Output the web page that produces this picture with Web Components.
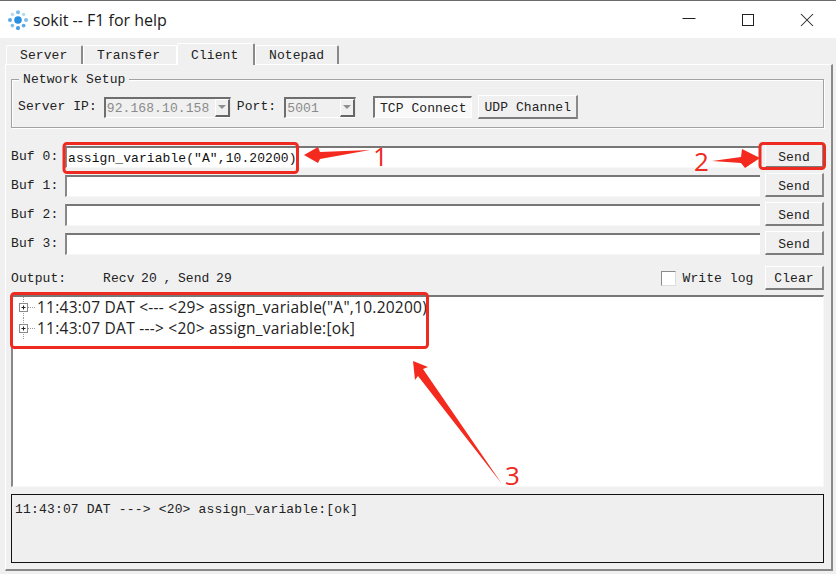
<!DOCTYPE html>
<html><head><meta charset="utf-8"><title>sokit</title>
<style>
html,body{margin:0;padding:0;background:#f5f5f5;overflow:hidden}
body{width:836px;height:574px;font:13px/16px "Liberation Mono",monospace;letter-spacing:.08px;color:#111}
</style></head><body>
<sokit-app>
  <title-bar slot="title">sokit -- F1 for help</title-bar>
  <tab-strip slot="tabs">
    <tab-item sep>Server</tab-item>
    <tab-item style="width:94px">Transfer</tab-item>
    <tab-item active sep style="width:78px">Client</tab-item>
    <tab-item sep style="width:84px">Notepad</tab-item>
  </tab-strip>
  <group-box label="Network Setup">
    <span>Server IP:</span>
    <combo-box style="width:127px;margin-left:7px">92.168.10.158</combo-box>
    <span style="margin-left:6px">Port:</span>
    <combo-box style="width:72px;margin-left:8px">5001</combo-box>
    <win-button pressed style="width:99px;height:22px;margin-left:17px">TCP Connect</win-button>
    <win-button style="width:100px;height:24px;margin-left:6px">UDP Channel</win-button>
  </group-box>
  <buf-row style="margin-top:16px" label="Buf 0:" value='assign_variable("A",10.20200)'></buf-row>
  <buf-row label="Buf 1:"></buf-row>
  <buf-row label="Buf 2:"></buf-row>
  <buf-row label="Buf 3:"></buf-row>
  <status-row recv="Recv 20 , Send 29"></status-row>
  <tree-view>
    <tree-row>11:43:07 DAT &lt;--- &lt;29&gt; assign_variable("A",10.20200)</tree-row>
    <tree-row>11:43:07 DAT ---&gt; &lt;20&gt; assign_variable:[ok]</tree-row>
  </tree-view>
  <log-box>11:43:07 DAT ---&gt; &lt;20&gt; assign_variable:[ok]</log-box>
  <red-markup slot="overlay"></red-markup>
</sokit-app>
<script>
function def(name, css, html, init){
  customElements.define(name, class extends HTMLElement{
    constructor(){super();const r=this.attachShadow({mode:'open'});
      r.innerHTML='<style>'+css+'</style>'+(typeof html==='function'?html(this):html);}
    connectedCallback(){ if(init) init(this); }
  });
}
const attr=(n,a)=>(n.getAttribute(a)||'');
def('sokit-app',
 `:host{display:flex;flex-direction:column;position:relative;width:836px;height:574px;box-sizing:border-box;border-top:1px solid #6b6b6b;background:#f5f5f5}
  .body{flex:none;background:#f0f0f0;height:536px;box-sizing:border-box;display:flex;flex-direction:column;padding:5px 0 3px}
  .pane{flex:1;margin:0 3px 0 5px;box-sizing:border-box;border-top:1px solid #fff;border-left:1px solid #fff;border-right:2px solid #888;border-bottom:2px solid #888;padding:14px 7px 6px 5px;display:flex;flex-direction:column;min-height:0}`,
 `<slot name="title"></slot><div class="body"><slot name="tabs"></slot><div class="pane"><slot></slot></div></div><slot name="overlay"></slot>`);
def('title-bar',
 `:host{display:flex;align-items:center;height:37px;background:#fff;font:16px/20px "Open Sans",sans-serif;letter-spacing:0;color:#1a1a1a;flex:none}
  .ico{margin:0 5px 0 8px;display:block;filter:blur(.35px)}
  .t{flex:1}
  .ctl{display:flex;width:176px;height:37px}
  .ctl div{flex:1;display:flex;align-items:center;justify-content:center}
  svg{display:block}`,
 `<svg class="ico" width="20" height="20" viewBox="0 0 20 20">
   <circle cx="10" cy="10" r="3.8" fill="#2b8fe0"/>
   <g fill="#7cbcea"><circle cx="10" cy="2.2" r="2"/><circle cx="15.6" cy="4.4" r="1.7" fill="#b4d9f2"/><circle cx="18" cy="10" r="2"/><circle cx="15.6" cy="15.6" r="1.9" fill="#5aa9e6"/><circle cx="10" cy="18" r="2.1" fill="#4aa0e4"/><circle cx="4.4" cy="15.6" r="1.8"/><circle cx="2" cy="10" r="2" fill="#5aa9e6"/><circle cx="4.4" cy="4.4" r="1.7" fill="#b4d9f2"/></g>
  </svg><span class="t"><slot></slot></span>
  <div class="ctl">
   <div><svg width="14" height="14" viewBox="0 0 14 14" style="margin-top:-2px"><path d="M0.5 6.5H13.5" stroke="#222" stroke-width="1"/></svg></div>
   <div><svg width="14" height="14" viewBox="0 0 14 14" style="margin-top:1px"><rect x="1.5" y="1.5" width="11" height="11" fill="none" stroke="#222" stroke-width="1"/></svg></div>
   <div><svg width="14" height="14" viewBox="0 0 14 14" style="margin-top:1px"><path d="M1 1L13 13M13 1L1 13" stroke="#222" stroke-width="1.05" fill="none"/></svg></div>
  </div>`);
def('tab-strip',`:host{display:flex;align-items:flex-end;height:21px;padding-left:6px;flex:none;position:relative}`,`<slot></slot>`);
def('tab-item',
 `:host{display:block;box-sizing:border-box;width:77px;height:19px;padding-left:13px;border-top:1px solid #fff;border-left:1px solid #fff;line-height:20px;color:#222;background:#f0f0f0;border-top-left-radius:2px;border-top-right-radius:2px;border-right:1px solid #fff}
  :host([sep]){border-right:2px solid #8a8a8a}
  :host([active]){height:22px;line-height:23px;margin-bottom:-1px;position:relative}`,
 `<slot></slot>`);
def('group-box',
 `:host{display:flex;align-items:center;box-sizing:border-box;height:49px;border:1px solid #a2a2a2;box-shadow:inset 1px 1px 0 #fff,1px 1px 0 #fff;padding:15px 0 8px 6px;position:relative;flex:none;color:#222}
  .lg{position:absolute;left:7px;top:-8px;padding:0 4px;background:#f0f0f0;line-height:16px}`,
 `<span class="lg"></span><slot></slot>`, n=>{n.shadowRoot.querySelector('.lg').textContent=attr(n,'label');});
def('combo-box',
 `:host{display:flex;box-sizing:border-box;height:21px;border-top:2px solid #6e6e6e;border-left:2px solid #6e6e6e;border-right:1px solid #e8e8e8;border-bottom:1px solid #fff;background:#f0f0f0;color:#8b8b8b;flex:none;overflow:hidden}
  .t{flex:1;padding-left:1px;line-height:19px;white-space:nowrap;overflow:hidden}
  .b{width:15px;flex:none;box-sizing:border-box;border-right:2px solid #666;border-bottom:2px solid #666;border-top:1px solid #fff;border-left:1px solid #fff;display:flex;align-items:center;justify-content:center;background:#f0f0f0}
  .b i{width:0;height:0;border-left:4px solid transparent;border-right:4px solid transparent;border-top:4px solid #8e8e8e}`,
 `<span class="t"><slot></slot></span><span class="b"><i></i></span>`);
def('win-button',
 `:host{display:flex;align-items:center;justify-content:center;box-sizing:border-box;flex:none;background:#f0f0f0;border-top:1px solid #fff;border-left:1px solid #fff;border-right:2px solid #8a8a8a;border-bottom:2px solid #7c7c7c;color:#222;white-space:nowrap;padding-top:3px}
  :host([pressed]){background:#f9f9f9;border-top:2px solid #777;border-left:2px solid #777;border-right:1px solid #fff;border-bottom:1px solid #fff}`,
 `<slot></slot>`);
def('buf-row',
 `:host{display:flex;align-items:flex-end;height:24px;margin-bottom:5px;flex:none;color:#222}
  .l{width:54px;line-height:26px;height:24px;align-self:flex-start}
  .f{width:695px;height:22px;box-sizing:border-box;background:#fff;border-top:2px solid #777;border-left:2px solid #888;border-bottom:1px solid #f7f7f7;color:#111;padding-left:1px;line-height:21px;white-space:nowrap;overflow:hidden}
  win-button{width:59px;height:24px;margin-left:5px;padding-top:5px}`,
 n=>`<span class="l">${attr(n,'label')}</span><span class="f"></span><win-button>Send</win-button>`,
 n=>{n.shadowRoot.querySelector('.f').textContent=attr(n,'value');});
def('status-row',
 `:host{display:flex;align-items:center;height:24px;margin-top:6px;margin-bottom:5px;flex:none;color:#222;line-height:18px}
  .o{width:92px;padding-top:2px}
  .r{flex:1;word-spacing:-1.3px;padding-top:2px}
  .c{width:15px;height:15px;box-sizing:border-box;background:#fff;border:1px solid #8a8a8a;border-right-color:#ddd;border-bottom-color:#ddd;margin-right:7px}
  .w{margin-right:11.5px;padding-top:2px}
  win-button{width:59px;height:24px;padding-top:3px}`,
 n=>`<span class="o">Output:</span><span class="r">${attr(n,'recv')}</span><span class="c"></span><span class="w">Write log</span><win-button>Clear</win-button>`);
def('tree-view',
 `:host{display:block;flex:1;min-height:0;box-sizing:border-box;background:#fff;border-top:2px solid #777;border-left:2px solid #888;border-right:1px solid #f8f8f8;border-bottom:1px solid #f8f8f8;font:15.5px/21px "Open Sans",sans-serif;letter-spacing:.25px;color:#222;margin-bottom:7px}`,
 `<slot></slot>`);
def('tree-row',
 `:host{display:flex;align-items:center;height:21px;padding-left:5px;white-space:nowrap}
  svg{display:block;flex:none;margin-right:1px}`,
 `<svg width="18" height="21" viewBox="0 0 18 21"><path d="M5.5 0V21" stroke="#999" stroke-dasharray="1 1" fill="none"/><path d="M10 10.5H18" stroke="#999" stroke-dasharray="1 1" fill="none"/><rect x="1.5" y="6.5" width="8" height="8" fill="#fff" stroke="#8a8a8a"/><path d="M3.5 10.5H7.5M5.5 8.5V12.5" stroke="#222" fill="none"/></svg><span><slot></slot></span>`);
def('log-box',
 `:host{display:block;box-sizing:border-box;height:69px;flex:none;border:1px solid #111;background:#efefef;padding:7px 3px;letter-spacing:.18px;white-space:nowrap;color:#222}`,
 `<slot></slot>`);
def('red-markup',
 `:host{position:absolute;left:0;top:-1px;width:836px;height:574px;pointer-events:none}
  svg{display:block}
  text{font-family:"Open Sans",sans-serif;fill:#ee2a22;font-weight:400}`,
 `<svg width="836" height="574" viewBox="0 0 836 574">
   <g fill="none" stroke="#ee2b20" stroke-width="3">
    <rect x="64" y="143.5" width="233.5" height="29" rx="3"/>
    <rect x="760" y="143.5" width="64.5" height="25" rx="3"/>
    <rect x="11.5" y="293.5" width="416" height="54" rx="3"/>
   </g>
   <g fill="#f42a1e">
    <polygon points="304,155 318,147 320,152 370,150 320,159 318,163"/>
    <polygon points="760,158 742,149 741,157 712,161 741,163 745,168"/>
    <polygon points="413,361 428,367 423,369 502,484 418,376 415,380"/>
   </g>
   <text x="373" y="166" font-size="26">1</text>
   <text x="694" y="171" font-size="26">2</text>
   <text x="505" y="485" font-size="26">3</text>
  </svg>`);
</script>
</body></html>
